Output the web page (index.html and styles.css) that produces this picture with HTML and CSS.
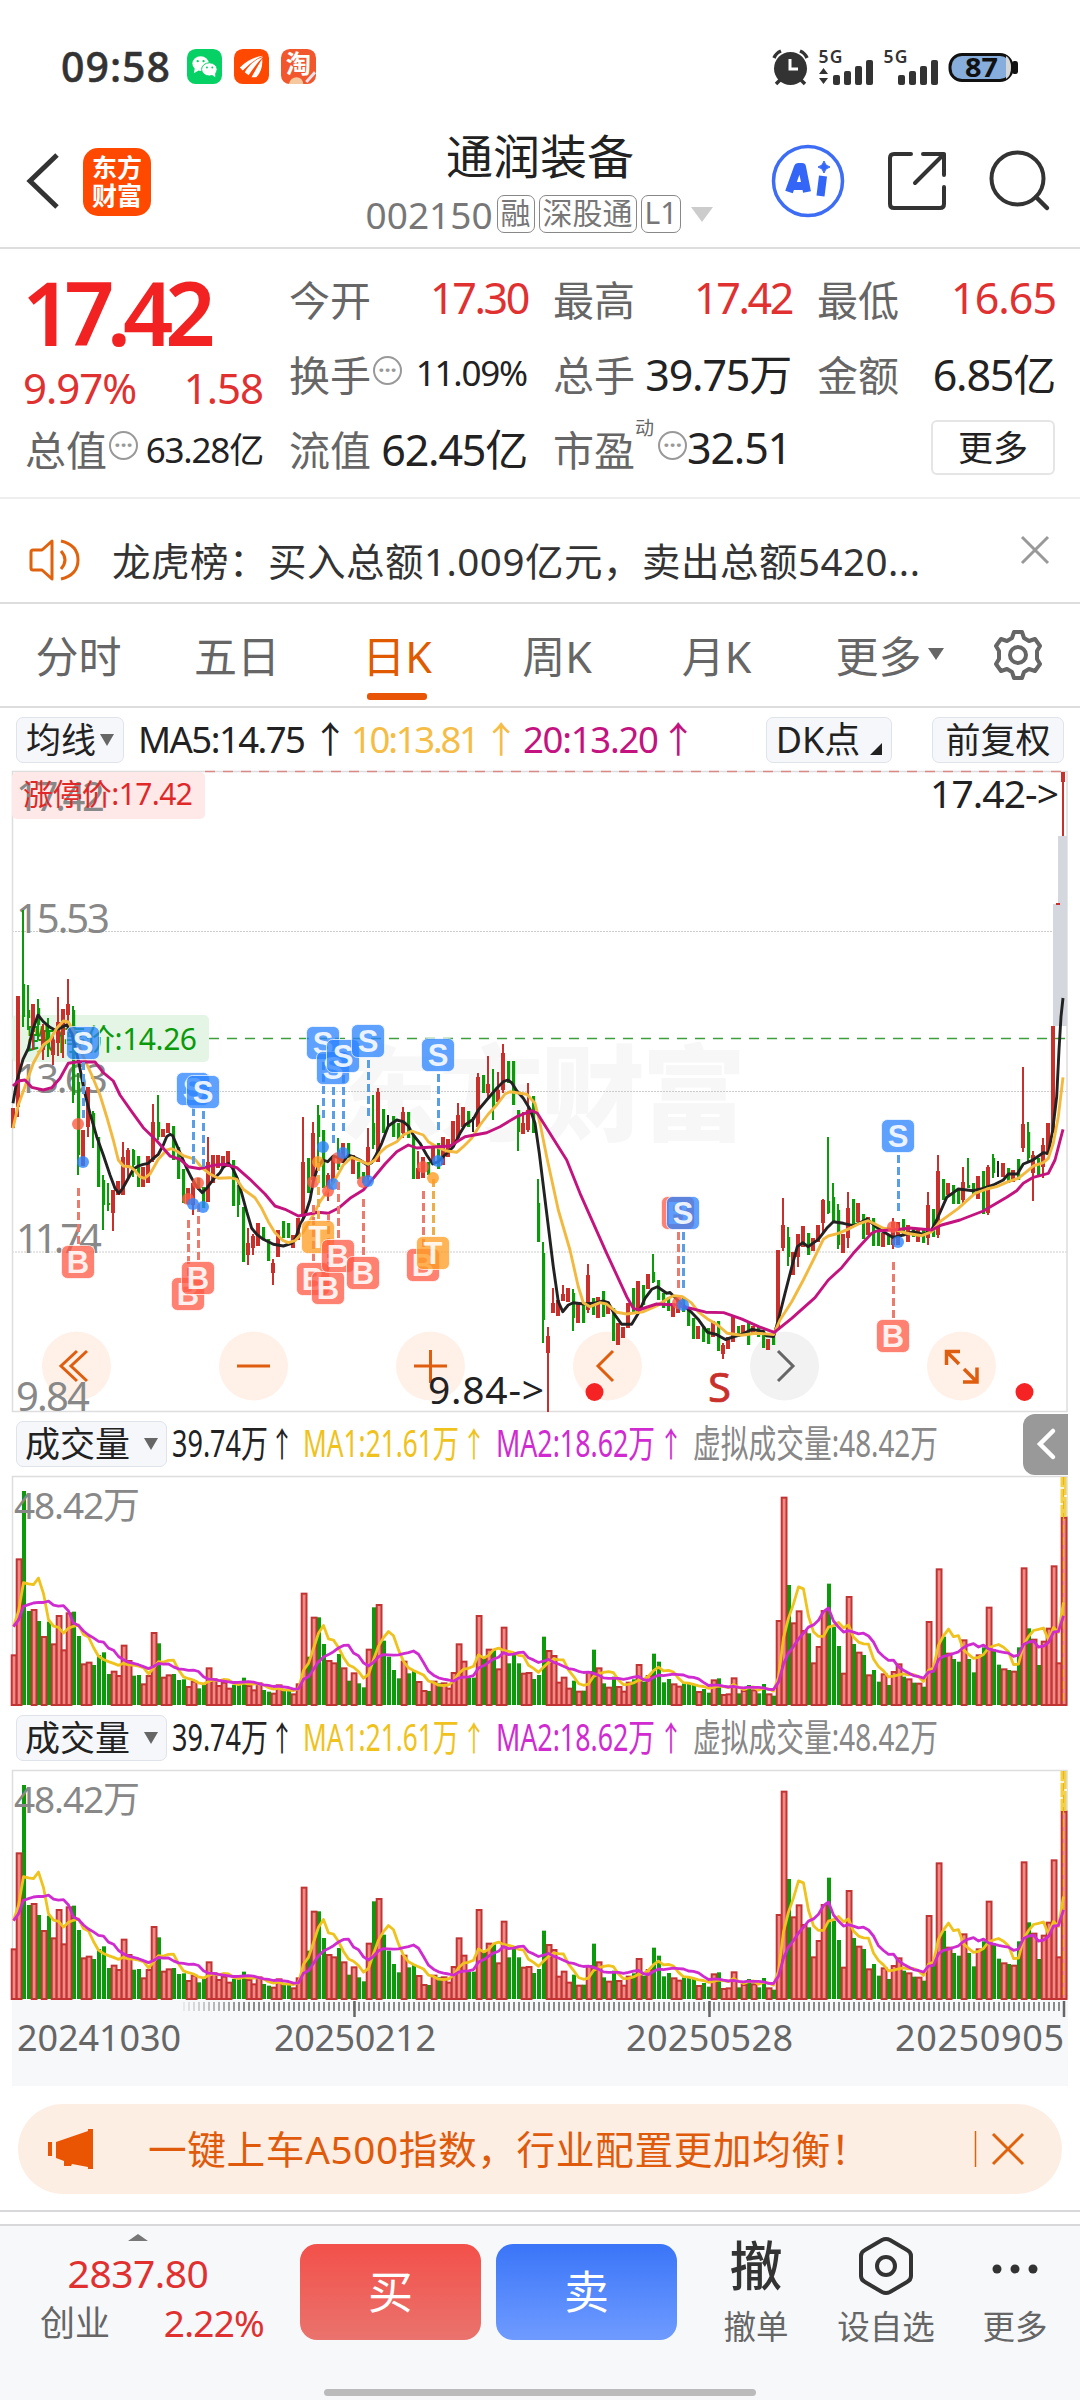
FILE: index.html
```html
<!DOCTYPE html>
<html lang="zh-CN">
<head>
    <meta charset="UTF-8">
    <meta name="viewport" content="width=device-width, initial-scale=1.0">
    <title>通润装备 002150</title>
    <link rel="stylesheet" href="styles.css">
</head>
<body>
    <div class="status-bar">
        <span class="clock">09:58</span>
        <svg class="app-icon" viewBox="0 0 36 36">
            <rect width="36" height="36" rx="9" fill="#06d165"/>
            <ellipse cx="14" cy="15" rx="8.5" ry="7.5" fill="#fff"/>
            <path d="M8 20l-1 5 5-3z" fill="#fff"/>
            <ellipse cx="23" cy="21" rx="8" ry="6.8" fill="#fff" stroke="#06d165"/>
            <path d="M25 26l4 3 0-5z" fill="#fff"/>
            <g fill="#06d165"><circle cx="11" cy="12.500" r="1.200"/><circle cx="17" cy="12.500" r="1.200"/><circle cx="20.500" cy="19" r="1"/><circle cx="26" cy="19" r="1"/></g>
        </svg>
        <svg class="app-icon" viewBox="0 0 36 36">
            <rect width="36" height="36" rx="9" fill="#ff4800"/>
            <path d="M6 19Q17 8 30 7Q20 11 9 22zM11 24Q18 12 30 8Q23 15 15 27zM18 29Q24 18 29 10Q30 22 23 29z" fill="#fff"/>
        </svg>
        <svg class="app-icon" viewBox="0 0 36 36">
            <rect width="36" height="36" rx="9" fill="#f2562c"/>
            <text x="18" y="25" text-anchor="middle" font-size="26" font-weight="700" fill="#fff">淘</text>
            <path d="M8 36q2-7 8-7t7 7z" fill="#f5c9a0"/>
            <path d="M26 34l9-10" stroke="#e8e2f0" stroke-width="3"/>
        </svg>
        <svg class="status-icons" viewBox="0 0 250 50">
            <g fill="#333">
                <circle cx="20.500" cy="23.500" r="16.500"/>
                <path d="M11 34l-5 5M30 34l5 5M4 13q2-5 7-7M37 13q-2-5-7-7" stroke="#333" stroke-width="3.500" fill="none"/>
                <path d="M20 14v10h8" stroke="#fff" stroke-width="3" fill="none"/>
                <text x="48.500" y="17.500" font-size="17.500" font-weight="600" textLength="24">5G</text>
                <path d="M49 26l4.500-6 4.500 6zM49 30l4.500 6 4.500-6z" transform="translate(0 3)"/>
                <rect x="63" y="30" width="7" height="10" rx="2"/><rect x="74" y="26" width="7" height="14" rx="2"/><rect x="85" y="21" width="7" height="19" rx="2"/><rect x="96" y="15" width="7" height="25" rx="2"/>
                <text x="113.500" y="17.500" font-size="17.500" font-weight="600" textLength="24">5G</text>
                <rect x="128" y="30" width="7" height="10" rx="2"/><rect x="139" y="26" width="7" height="14" rx="2"/><rect x="150" y="21" width="7" height="19" rx="2"/><rect x="161" y="15" width="7" height="25" rx="2"/>
            </g>
            <rect x="180" y="9.500" width="62" height="26" rx="12" fill="#86addb" stroke="#111" stroke-width="3"/>
            <path d="M236 11q5 3 5 11.500t-5 11.500z" fill="#d6d6d6"/>
            <rect x="242" y="16" width="6" height="13" rx="2.500" fill="#111"/>
            <text x="195" y="32" font-size="27" font-weight="700" fill="#111" textLength="33" lengthAdjust="spacingAndGlyphs">87</text>
        </svg>
    </div>

    <header class="header">
        <svg class="back" viewBox="0 0 34 56"><path d="M31 2L4 28l27 26" fill="none" stroke="#333" stroke-width="5"/></svg>
        <div class="logo">东方<br>财富</div>
        <div class="heading">
            <h1>通润装备</h1>
            <div class="code">
                <span>002150</span><i class="tag">融</i><i class="tag">深股通</i><i class="tag">L1</i><b class="arrow"></b>
            </div>
        </div>
        <svg class="ai" viewBox="0 0 74 74">
            <circle cx="37" cy="37" r="34.500" fill="none" stroke="#3d6cf5" stroke-width="3.500"/>
            <path d="M18 48L27 23h4l5 25M22 42h13" fill="none" stroke="#3366f6" stroke-width="8" stroke-linejoin="round"/>
            <path d="M52 32L49.500 52" stroke="#3366f6" stroke-width="8"/>
            <path d="M53 17q1 5 6 6q-5 1-6 6q-1-5-6-6q5-1 6-6z" fill="#3366f6" stroke="#3366f6"/>
        </svg>
        <svg class="share" viewBox="0 0 60 60">
            <path d="M24 4H7q-4 0-4 4v46q0 4 4 4h46q4 0 4-4V37M36 4h21v21M57 4L28 33" fill="none" stroke="#333" stroke-width="4" stroke-linecap="round" stroke-linejoin="round"/>
        </svg>
        <svg class="search" viewBox="0 0 60 62">
            <circle cx="27.500" cy="28.500" r="26" fill="none" stroke="#333" stroke-width="4"/>
            <path d="M46 47l11 11" stroke="#333" stroke-width="4.500" stroke-linecap="round"/>
        </svg>
    </header>

    <section class="quote">
        <div class="price">17.42</div>
        <div class="change"><span>9.97%</span><span>1.58</span></div>
        <div class="item c2 r1"><label>今开</label><em class="up">17.30</em></div>
        <div class="item c3 r1"><label>最高</label><em class="up">17.42</em></div>
        <div class="item c4 r1"><label>最低</label><em class="up wide">16.65</em></div>
        <div class="item c2 r2"><label>换手</label><i class="more-dot">···</i><em class="small">11.09%</em></div>
        <div class="item c3 r2"><label>总手</label><em>39.75万</em></div>
        <div class="item c4 r2"><label>金额</label><em>6.85亿</em></div>
        <div class="item c1 r3"><label>总值</label><i class="more-dot">···</i><em class="small">63.28亿</em></div>
        <div class="item c2 r3"><label>流值</label><em>62.45亿</em></div>
        <div class="item c3 r3"><label>市盈</label><sup>动</sup><i class="more-dot">···</i><em>32.51</em></div>
        <button class="more-btn">更多</button>
    </section>

    <section class="news">
        <svg class="speaker" viewBox="0 0 52 44">
            <path d="M4 12h9L23 3v38L13 32H4q-2 0-2-2V14q0-2 2-2z" fill="none" stroke="#e0620d" stroke-width="3" stroke-linejoin="round"/>
            <path d="M32 13q8 9 0 18M32 3q17 4 17 19t-17 19" fill="none" stroke="#e0620d" stroke-width="3"/>
        </svg>
        <p>龙虎榜：买入总额1.009亿元，卖出总额5420...</p>
        <svg class="close" viewBox="0 0 30 30"><path d="M2 2l26 26M28 2L2 28" stroke="#999" stroke-width="3"/></svg>
    </section>

    <nav class="tabs">
        <a>分时</a><a>五日</a><a class="active">日K</a><a>周K</a><a>月K</a><a>更多<b></b></a>
        <svg class="gear" viewBox="0 0 52 52">
            <path d="M22 3h8l2 6 5 3 6-2 5 7-3 5v8l3 5-5 7-6-2-5 3-2 6h-8l-2-6-5-3-6 2-5-7 3-5v-8l-3-5 5-7 6 2 5-3z" fill="none" stroke="#666" stroke-width="4" stroke-linejoin="round"/>
            <circle cx="26" cy="26" r="8" fill="none" stroke="#666" stroke-width="4"/>
        </svg>
    </nav>

    <div class="ma-row">
        <button class="chip ma-chip">均线<b class="down"></b></button>
        <svg class="ma-text" viewBox="0 0 560 50">
            <text x="0" y="38" textLength="168" fill="#222">MA5:14.75</text><text x="174" y="38" fill="#222">↑</text>
            <text x="213" y="38" textLength="129" fill="#f5bd45">10:13.81</text><text x="345" y="38" fill="#f5bd45">↑</text>
            <text x="385" y="38" textLength="136" fill="#c4127f">20:13.20</text><text x="522" y="38" fill="#c4127f">↑</text>
        </svg>
        <button class="chip dk-chip">DK点<b class="corner"></b></button>
        <button class="chip fq-chip">前复权</button>
    </div>

    <svg class="kline" id="kline" viewBox="0 771 1080 641"></svg>

    <div class="vol-head">
        <button class="chip vol-chip">成交量<b class="down"></b></button>
        <svg class="vol-text" viewBox="0 0 780 50">
            <text x="0" y="38" textLength="96" lengthAdjust="spacingAndGlyphs" fill="#222">39.74万</text><text class="tip" x="98" y="38" textLength="24" lengthAdjust="spacingAndGlyphs" fill="#222">↑</text>
            <text x="131" y="38" textLength="156" lengthAdjust="spacingAndGlyphs" fill="#efc21c">MA1:21.61万</text><text class="tip" x="290" y="38" textLength="24" lengthAdjust="spacingAndGlyphs" fill="#efc21c">↑</text>
            <text x="324" y="38" textLength="159" lengthAdjust="spacingAndGlyphs" fill="#cf2bd0">MA2:18.62万</text><text class="tip" x="487" y="38" textLength="24" lengthAdjust="spacingAndGlyphs" fill="#cf2bd0">↑</text>
            <text x="521" y="38" textLength="245" lengthAdjust="spacingAndGlyphs" fill="#888">虚拟成交量:48.42万</text>
        </svg>
        <div class="fold"><svg viewBox="0 0 20 32"><path d="M17 3L4 16l13 13" fill="none" stroke="#fff" stroke-width="4.500" stroke-linecap="round"/></svg></div>
    </div>
    <svg class="volume" viewBox="0 0 1080 230"></svg>

    <div class="vol-head">
        <button class="chip vol-chip">成交量<b class="down"></b></button>
        <svg class="vol-text" viewBox="0 0 780 50">
            <text x="0" y="38" textLength="96" lengthAdjust="spacingAndGlyphs" fill="#222">39.74万</text><text class="tip" x="98" y="38" textLength="24" lengthAdjust="spacingAndGlyphs" fill="#222">↑</text>
            <text x="131" y="38" textLength="156" lengthAdjust="spacingAndGlyphs" fill="#efc21c">MA1:21.61万</text><text class="tip" x="290" y="38" textLength="24" lengthAdjust="spacingAndGlyphs" fill="#efc21c">↑</text>
            <text x="324" y="38" textLength="159" lengthAdjust="spacingAndGlyphs" fill="#cf2bd0">MA2:18.62万</text><text class="tip" x="487" y="38" textLength="24" lengthAdjust="spacingAndGlyphs" fill="#cf2bd0">↑</text>
            <text x="521" y="38" textLength="245" lengthAdjust="spacingAndGlyphs" fill="#888">虚拟成交量:48.42万</text>
        </svg>
    </div>
    <svg class="volume" viewBox="0 0 1080 230"></svg>

    <svg class="axis" id="axis" viewBox="12 0 1056 86"></svg>

    <div class="banner">
        <svg class="horn" viewBox="0 0 46 40"><path d="M0 13h4v14H0zM8 13L40 2V0h5v40h-5v-2l-16-3-1 2h-7v-5l-8-3z" fill="#ea5504"/></svg>
        <p>一键上车A500指数，行业配置更加均衡！</p>
        <svg class="banner-close" viewBox="0 0 52 40"><path d="M1.500 2v36" stroke="#e0620d" stroke-width="1.500"/><path d="M19 5l30 30M49 5L19 35" stroke="#e0620d" stroke-width="3"/></svg>
    </div>

    <footer class="footer">
        <div class="index">
            <b class="up-arrow"></b>
            <div class="index-value">2837.80</div>
            <div class="index-row"><span>创业</span><em>2.22%</em></div>
        </div>
        <button class="trade buy">买</button>
        <button class="trade sell">卖</button>
        <div class="tool t1"><strong>撤</strong><span>撤单</span></div>
        <div class="tool t2">
            <svg viewBox="0 0 56 60"><path d="M28 3q2 0 4 1l17 10q4 2 4 6v20q0 4-4 6L32 56q-4 2-8 0L7 46q-4-2-4-6V20q0-4 4-6L24 4q2-1 4-1z" fill="none" stroke="#333" stroke-width="4"/><circle cx="28" cy="30" r="9" fill="none" stroke="#333" stroke-width="4"/></svg>
            <span>设自选</span>
        </div>
        <div class="tool t3">
            <svg viewBox="0 0 56 60"><g fill="#333"><circle cx="10" cy="33" r="4.500"/><circle cx="28" cy="33" r="4.500"/><circle cx="46" cy="33" r="4.500"/></g></svg>
            <span>更多</span>
        </div>
        <div class="home"></div>
    </footer>
    <script src="chart.js"></script>
</body>
</html>
```
FILE: styles.css
```css
* {
    box-sizing: border-box;
}
html, body {
    margin: 0;
    padding: 0;
}
body {
    width: 1080px;
    height: 2400px;
    overflow: hidden;
    background: #fff;
    color: #222;
    font-family: "Noto Sans", "Noto Sans CJK SC", sans-serif;
}
svg {
    display: block;
    flex: none;
    overflow: visible;
}
svg text {
    font-family: "Noto Sans", "Noto Sans CJK SC", sans-serif;
}
h1, p {
    margin: 0;
    font-weight: 400;
}
em, i {
    font-style: normal;
}
button {
    font-family: inherit;
    padding: 0;
    margin: 0;
}

/* 状态栏 */
.status-bar {
    height: 130px;
    padding: 44px 60px 0 61px;
    display: flex;
    align-items: flex-start;
}
.clock {
    width: 126px;
    font-size: 41px;
    line-height: 44px;
    font-weight: 500;
    letter-spacing: 1px;
    color: #333;
    -webkit-text-stroke: 0.5px #333;
}
.app-icon {
    width: 35px;
    height: 35px;
    margin: 5px 12px 0 0;
}
.status-icons {
    width: 250px;
    height: 50px;
    margin: 1px 0 0 auto;
}

/* 标题 */
.header {
    height: 119px;
    border-bottom: 2px solid #ddd;
    display: flex;
    align-items: flex-start;
}
.back {
    width: 34px;
    height: 56px;
    margin: 23px 0 0 26px;
}
.logo {
    width: 68px;
    height: 68px;
    margin: 18px 0 0 23px;
    border-radius: 15px;
    background: #ff4800;
    color: #fff;
    font-size: 25px;
    line-height: 28px;
    padding-top: 5px;
    font-weight: 700;
    text-align: center;
}
.heading {
    width: 400px;
    margin: -2px 0 0 189px;
    text-align: center;
}
.heading h1 {
    font-size: 47px;
    line-height: 56px;
}
.code {
    display: flex;
    align-items: center;
    justify-content: center;
    gap: 4px;
    height: 60px;
    color: #777;
    font-size: 37px;
    padding-right: 21px;
    margin-left: 20px;
}
.tag {
    height: 38px;
    padding: 0 3px;
    border: 1.5px solid #888;
    border-radius: 7px;
    font-size: 30px;
    line-height: 34px;
}
.arrow {
    margin-left: 6px;
    border: 11px solid transparent;
    border-top: 15px solid #ccc;
    border-bottom: 0;
}
.ai {
    width: 74px;
    height: 74px;
    margin: 14px 0 0 31px;
}
.share {
    width: 60px;
    height: 60px;
    margin: 20px 0 0 42px;
}
.search {
    width: 60px;
    height: 62px;
    margin: 20px 0 0 43px;
}

/* 报价 */
.quote {
    height: 250px;
    padding: 11px 25px 0 26px;
    display: grid;
    grid-template-columns: 237px 237px 237px 237px;
    grid-template-rows: 75px 75px 75px;
    column-gap: 27px;
    border-bottom: 2px solid #eee;
}
.price {
    grid-area: 1 / 1 / 3 / 2;
    font-size: 88px;
    line-height: 104px;
    font-weight: 600;
    letter-spacing: -8px;
    margin-left: -4px;
    color: #f22222;
}
.change {
    grid-area: 1 / 1 / 3 / 2;
    align-self: end;
    display: flex;
    justify-content: space-between;
    font-size: 42px;
    line-height: 50px;
    letter-spacing: -1px;
    color: #e03030;
    margin: 0 0 -3px -3px;
}
.item {
    display: flex;
    align-items: center;
    min-width: 0;
    white-space: nowrap;
    font-size: 43px;
    margin-left: -1px;
}
.item label {
    color: #666;
    font-size: 41px;
    width: 82px;
}
.item em {
    margin-left: auto;
    letter-spacing: -1.2px;
}
.item .up {
    color: #e03030;
    letter-spacing: -2.4px;
    margin-right: -1px;
}
.item .up.wide {
    letter-spacing: -1px;
}
.item .small {
    font-size: 35px;
    letter-spacing: -1.2px;
}
.item sup {
    font-size: 19px;
    color: #666;
    margin-top: -40px;
    width: 22px;
    line-height: 20px;
}
.more-dot {
    width: 29px;
    height: 29px;
    flex: none;
    border: 2px solid #999;
    border-radius: 50%;
    color: #999;
    font-size: 22px;
    line-height: 23px;
    font-weight: 700;
    letter-spacing: 0;
    text-align: center;
    margin: -4px 0 0 2px;
}
.c1 { grid-column: 1; }
.c2 { grid-column: 2; }
.c3 { grid-column: 3; }
.c4 { grid-column: 4; }
.r1 { grid-row: 1; }
.r2 { grid-row: 2; }
.r3 { grid-row: 3; }
.more-btn {
    grid-area: 3 / 4;
    justify-self: end;
    align-self: center;
    width: 124px;
    height: 55px;
    border: 2px solid #e5e5e5;
    border-radius: 6px;
    background: #fff;
    color: #222;
    font-size: 35px;
    line-height: 48px;
}

/* 公告 */
.news {
    height: 105px;
    border-bottom: 2px solid #ddd;
    display: flex;
    align-items: center;
    padding: 19px 30px 0 29px;
}
.speaker {
    width: 52px;
    height: 44px;
}
.news p {
    width: 840px;
    margin: -2px 0 0 31px;
    font-size: 38.5px;
    letter-spacing: 0.5px;
    white-space: nowrap;
    color: #333;
}
.close {
    width: 30px;
    height: 30px;
    margin: -20px 0 0 68px;
}

/* 周期 */
.tabs {
    height: 104px;
    border-bottom: 2px solid #ddd;
    display: grid;
    grid-template-columns: 157px 160px 160px 160px 159px 187px 52px;
    align-items: center;
}
.tabs a {
    height: 102px;
    line-height: 106px;
    text-align: center;
    font-size: 43px;
    color: #666;
}
.tabs .active {
    color: #e05a00;
    display: flex;
    flex-direction: column;
    align-items: center;
}
.tabs .active::after {
    content: "";
    width: 60px;
    height: 7px;
    border-radius: 3px;
    background: #e95506;
    flex: none;
    margin-top: -17px;
}
.tabs b {
    display: inline-block;
    margin: 0 0 13px 6px;
    border: 8px solid transparent;
    border-top: 12px solid #666;
    border-bottom: 0;
}
.gear {
    width: 52px;
    height: 52px;
    margin-left: 9px;
}

/* 均线 */
.ma-row, .vol-head {
    height: 64px;
    display: flex;
    align-items: center;
    padding: 0 16px;
}
.chip {
    height: 46px;
    border: 1.5px solid #dfe3ea;
    border-radius: 7px;
    background: #f6f7fb;
    color: #222;
    font-size: 35px;
    line-height: 42px;
    white-space: nowrap;
    display: flex;
    align-items: center;
    justify-content: center;
}
.down {
    border: 7.5px solid transparent;
    border-top: 12px solid #666;
    border-bottom: 0;
}
.ma-chip {
    width: 108px;
}
.ma-chip .down {
    margin-left: 4px;
}
.ma-text {
    width: 560px;
    height: 50px;
    margin-left: 14px;
    font-size: 36.5px;
}
.dk-chip {
    width: 126px;
    margin-left: 68px;
    gap: 10px;
    font-size: 36px;
}
.corner {
    border-left: 12px solid transparent;
    border-bottom: 12px solid #222;
    margin-top: 18px;
}
.fq-chip {
    width: 132px;
    margin-left: 40px;
}
.ma-row {
    height: 63px;
}
.kline {
    width: 1080px;
    height: 641px;
}

/* 成交量 */
.vol-head {
    padding-right: 12px;
}
.vol-chip {
    width: 151px;
    gap: 14px;
    font-size: 35px;
}
.vol-text {
    width: 780px;
    height: 50px;
    margin-left: 5px;
    font-size: 38px;
}
.vol-text .tip {
    font-size: 34px;
}
.fold {
    width: 45px;
    height: 61px;
    margin-left: auto;
    border-radius: 12px 0 0 12px;
    background: #999;
    display: flex;
    align-items: center;
    justify-content: center;
}
.fold svg {
    width: 20px;
    height: 32px;
}
.volume {
    width: 1080px;
    height: 230px;
}
.axis {
    width: 1056px;
    height: 86px;
    margin-left: 12px;
    background: #f7f8fa;
}

/* 广告条 */
.banner {
    width: 1044px;
    height: 90px;
    margin: 18px 18px 16px;
    border-radius: 45px;
    background: #fdeee4;
    display: flex;
    align-items: center;
    padding: 0 36px 0 30px;
}
.horn {
    width: 46px;
    height: 40px;
}
.banner p {
    margin: -4px 0 0 54px;
    font-size: 38.7px;
    letter-spacing: 0.6px;
    color: #e05a0c;
    white-space: nowrap;
}
.banner-close {
    width: 52px;
    height: 40px;
    margin-left: auto;
}

/* 底部 */
.footer {
    height: 190px;
    border-top: 2px solid #d8d8da;
    background: linear-gradient(#fff 12px, #d8d8da 12px, #d8d8da 14px, #f6f8fa 14px);
    display: grid;
    grid-template-columns: 300px 181px 181px 108px 175px 120px;
    grid-template-rows: 166px 22px;
}
.footer .sell {
    margin-left: 15px;
}
.index {
    width: 276px;
    padding-top: 22px;
    display: flex;
    flex-direction: column;
    align-items: center;
}
.up-arrow {
    border: 10px solid transparent;
    border-bottom: 7px solid #777;
    border-top: 0;
}
.index-value {
    font-size: 39px;
    line-height: 42px;
    margin-top: 11px;
    letter-spacing: -0.5px;
    color: #e03030;
}
.index-row {
    width: 224px;
    margin: 7px 0 0 28px;
    display: flex;
    justify-content: space-between;
    font-size: 35px;
    line-height: 44px;
    color: #666;
}
.index-row em {
    font-size: 37px;
    letter-spacing: -0.8px;
    color: #e03030;
}
.trade {
    width: 181px;
    height: 96px;
    margin-top: 32px;
    border: 0;
    border-radius: 17px;
    color: #fff;
    font-size: 45px;
    line-height: 90px;
}
.buy {
    background: linear-gradient(#f3504a, #ea736d);
}
.sell {
    background: linear-gradient(#3a75f8, #6f9bff);
}
.tool {
    display: flex;
    flex-direction: column;
    align-items: center;
    padding-top: 24px;
    font-size: 32.5px;
    color: #666;
    white-space: nowrap;
}
.tool strong {
    height: 60px;
    font-size: 53px;
    line-height: 60px;
    font-weight: 500;
    color: #333;
}
.tool svg {
    width: 56px;
    height: 60px;
}
.tool span {
    line-height: 40px;
    margin-top: 11px;
}
.t1 {
    width: 120px;
    margin-left: 34px;
}
.t2 {
    width: 120px;
    margin-left: 56px;
}
.t3 {
    width: 120px;
    margin-left: 10px;
}
.home {
    grid-column: 1 / -1;
    width: 432px;
    height: 7px;
    margin: 11px auto 0 324px;
    border-radius: 4px;
    background: #bbb;
}
```
FILE: chart.js
```javascript
// 每根K线: 颜色 最高 最低 [实体上 实体下]
const candles = `r1108,1128 r996,1117,996,1107 g910,1027,984,1017 g985,1030,1010,1018 r1004,1050,1004,1032
g999,1040,1008,1025 r1024,1060,1030,1050 g1018,1057,1030,1047 r1033,1065,1040,1055 r997,1056,1022,1043
r1009,1058,1009,1035 r979,1030,1004,1015 g1006,1103,1010,1095 g1073,1175,1082,1155 r1130,1166
r1087,1137,1087,1127 g1111,1148,1113,1130 g1137,1187 g1175,1230,1180,1205 g1183,1211,1203,1205
r1190,1231,1190,1213 r1181,1195 r1142,1195,1157,1195 r1148,1178,1150,1168 g1149,1177,1150,1165
g1156,1187 r1167,1187 r1156,1183 r1104,1162,1122,1160 g1095,1140,1122,1137
r1129,1137 r1123,1133 g1126,1160 g1147,1179 g1169,1203
r1188,1204 r1183,1215,1183,1205 g1178,1190 g1187,1208 r1137,1202,1162,1202
r1155,1183 r1155,1168 r1156,1168 r1151,1167 g1160,1206
g1185,1217,1188,1205 g1207,1262 r1228,1265,1243,1255 r1234,1255,1236,1248 r1223,1246
g1227,1240 g1239,1261 r1259,1285,1263,1273 r1230,1257 g1221,1238
g1223,1238 r1235,1248 r1218,1240 r1117,1220,1162,1215 g1158,1193
r1122,1187,1133,1180 g1105,1167,1115,1137 g1130,1188 r1173,1201,1175,1187 r1156,1183
g1138,1170,1150,1167 r1143,1163 g1143,1158 r1155,1174 g1162,1179
g1172,1183 r1128,1182,1147,1177 g1095,1149,1123,1145 r1088,1162,1092,1162 g1109,1133
k1115,1127 g1116,1137 g1123,1139 r1107,1138,1112,1133 g1112,1138
g1135,1179 r1151,1179,1168,1179 r1157,1178 g1162,1175 r1148,1163
g1143,1169 r1137,1165 r1139,1157 r1121,1147 r1103,1140,1115,1138
r1107,1127 g1111,1127 k1117,1132 r1073,1127,1077,1127 g1075,1093
r1056,1098,1084,1093 g1069,1120,1090,1107 r1072,1103,1090,1102 r1044,1093,1053,1090 g1061,1083
g1061,1105 g1110,1151,1110,1132 r1112,1134,1123,1134 r1083,1132,1110,1130 g1096,1133
g1179,1242,1203,1242 g1242,1343,1253,1320 r1327,1412,1336,1353 r1288,1313,1303,1313 r1300,1316
r1285,1301,1294,1301 r1288,1302 g1289,1331,1293,1318 r1303,1323 g1303,1323
r1264,1313,1275,1310 g1298,1315 r1297,1318 g1291,1317 r1302,1314
g1308,1341 r1323,1345 r1327,1338 r1303,1328 g1288,1313
r1281,1312 g1285,1305 r1274,1289 g1254,1283,1272,1282 g1280,1300
g1293,1308 g1297,1311 r1303,1317 r1300,1313 g1298,1312
g1307,1326 g1318,1339 r1326,1339 g1326,1342 g1328,1344
r1321,1337 g1321,1351 r1343,1359,1345,1354 r1337,1349 r1315,1342
g1326,1337 r1325,1334 g1321,1345 r1326,1335 g1327,1337
g1330,1348 r1339,1350 g1337,1345 r1250,1330 r1198,1251,1225,1248
g1227,1266,1237,1257 r1252,1275 r1234,1267,1234,1257 r1226,1247 g1233,1255
r1238,1251 r1225,1242 r1199,1233,1200,1223 g1137,1214,1201,1213 g1183,1223,1197,1222
g1204,1249,1210,1245 r1234,1253 r1192,1248,1208,1238 g1199,1225 r1203,1222
g1214,1239 r1217,1235 g1218,1246 g1230,1246 r1233,1247
g1234,1245 r1218,1249,1222,1245 r1222,1245 g1219,1235 r1225,1242
g1227,1237 r1230,1242 g1230,1243 r1192,1245,1205,1238 g1209,1237
r1155,1238,1171,1235 g1179,1200 r1183,1195 g1185,1204 g1190,1204
r1167,1203,1182,1200 g1158,1188,1185,1188 g1183,1195 r1176,1199 g1171,1214
r1165,1215,1167,1213 g1154,1178,1158,1173 k1161,1177 r1163,1177 g1168,1183
r1170,1182 g1159,1180 r1067,1152,1124,1148 g1122,1162,1132,1158 r1151,1201,1155,1173
g1158,1175 r1138,1178,1145,1167 r1123,1155 r1026,1133 r903,905
r772,836,772,782`.split(/\s+/).map(s => ({ c: s[0], v: s.slice(1).split(',').map(Number) }));

// 成交量柱顶位置
const tops = [733,445,243,603,597,633,678,635,700,615,718,607,605,678,760,755,765,735,727,792,
    782,795,704,750,797,795,820,795,666,700,800,793,792,810,808,828,812,835,825,772,
    805,825,815,833,825,822,803,825,838,817,840,845,848,823,843,843,850,820,548,740,
    620,622,702,750,757,732,772,812,787,820,832,716,592,582,692,740,780,805,752,790,
    780,813,840,843,812,820,817,833,786,700,752,803,803,615,745,716,720,775,650,760,
    735,760,788,786,807,795,680,720,735,815,800,833,812,842,842,783,719,772,820,830,
    800,828,842,815,808,762,815,795,731,755,817,807,820,827,820,822,825,843,837,848,
    808,805,852,850,802,850,840,825,838,850,822,850,857,630,260,525,637,601,660,670,
    757,708,600,521,650,708,788,558,702,725,735,793,780,815,790,825,783,760,800,805,
    818,818,830,633,770,475,680,728,747,755,688,747,787,733,712,590,718,764,775,780,
    782,712,472,655,686,765,692,653,466,757,320];
// 首日之前的数据，均线用
const before = [650,650,650,650,650,674,674,585,585];

const RED = '#c9302c', GREEN = '#0a9a0a';
const colors = { r: RED, g: GREEN, k: '#222' };

// 每段: [原点x, 原点y, 横向比例, 纵向比例, 点...]
const A = [0, 900, 3, 3], B = [280, 980, 3, 3], C = [520, 760, 2.8, 2.376], D = [760, 1000, 3, 3];
const lines = {
    '#222': [
        [A, '39,610 50,545 69,478 85,445 98,390 114,345 130,365 150,382 165,390 180,385 200,374 215,400 225,440 237,490 252,570 270,640 290,710 310,765 330,825 345,865 357,880 370,862 385,835 400,808 415,798 430,793 445,790 460,775 475,763 490,735 500,710 510,703 518,707 530,735 545,770 560,805 575,835 590,860 607,878 620,865 640,838 660,818 670,802 685,790 697,803 712,835 725,880 740,935 755,985 770,1003 790,1018 805,1025 820,1033 850,1038'],
        [B, '35,790 48,772 58,740 75,705 90,660 100,605 112,565 128,540 143,545 160,528 175,533 190,545 205,525 220,530 240,540 262,555 275,548 288,525 305,490 325,438 350,420 370,425 385,438 400,465 420,490 440,525 458,552 475,545 500,520 520,500 540,460 555,435 580,418 595,390 620,360 650,325 670,305 683,300 695,308 710,332 730,355 750,388 765,430 778,520 800,700 820,860 835,965 848,995 865,975 880,968 910,972 940,970 970,963 985,968 1005,1005 1025,1033 1055,1033 1075,1000 1095,955 1115,928 1132,920 1160,940'],
        [C, '420,1265 455,1295 480,1312 500,1330 525,1360 550,1365 575,1377 600,1370 620,1365 650,1353 680,1358 690,1368 710,1370'],
        [D, '55,960 75,880 97,795 112,740 128,728 145,740 175,718 200,685 220,665 250,670 280,677 300,668 322,657 345,678 365,692 398,712 430,705 460,695 490,703 515,690 530,660 560,592 580,578 595,567 640,572 670,565 700,555 730,540 745,522 772,522 790,492 815,482 850,458 865,460 878,390 890,290 897,150 903,50 909,-6']
    ],
    '#f3b93f': [
        [A, '39,685 55,615 80,545 100,490 130,435 150,420 170,385 190,363 205,366 225,400 250,470 275,525 300,585 320,650 340,720 355,780 370,798 390,800 405,812 420,830 433,835 450,822 475,778 500,750 515,746 530,753 550,767 585,778 605,803 630,822 655,835 690,833 710,838 730,868 765,893 785,925 805,965 825,998 850,1022 865,1028'],
        [B, '45,782 70,755 100,705 120,665 145,630 170,590 190,555 215,532 240,542 265,553 285,540 300,518 320,500 350,485 370,465 395,453 430,465 445,485 475,503 500,513 530,517 550,500 575,475 600,435 625,402 650,375 675,342 690,335 740,343 765,370 780,430 800,530 835,690 870,810 895,920 910,968 930,980 960,968 980,972 1010,997 1040,1002 1090,995 1130,978 1165,955'],
        [C, '430,1273 455,1275 480,1290 500,1312 525,1328 550,1340 580,1362 620,1367 660,1362 710,1365'],
        [D, '60,960 95,905 130,840 160,780 190,718 205,708 235,700 270,685 300,670 325,662 345,672 370,685 410,690 440,700 485,707 515,695 540,665 595,625 645,580 680,567 710,560 745,545 775,535 800,515 820,498 850,488 865,475 880,430 895,350 909,232']
    ],
    '#c4127f': [
        [A, '39,558 55,543 75,540 95,562 130,570 155,563 180,535 205,490 235,485 285,486 310,518 340,543 360,585 395,635 430,683 470,722 510,768 540,778 565,800 600,806 640,796 675,793 710,803 750,838 795,882 825,918 855,928'],
        [B, '30,695 55,708 115,697 145,700 175,685 210,655 250,630 280,595 315,552 350,515 385,495 410,504 510,498 555,470 620,458 660,440 710,410 757,392 772,400 860,540 900,640 980,820 1040,950 1060,985 1075,990 1130,972'],
        [C, '440,1295 520,1312 570,1313 620,1328 670,1347 712,1360'],
        [D, '95,955 165,893 205,840 245,803 280,760 335,700 350,693 420,688 450,684 515,690 545,675 600,660 670,633 740,592 770,572 790,550 820,532 865,520 885,480 909,388']
    ]
};

// 买卖点: 类型 x 标签y 圆点y
const marks = [
    ['B', 78, 1262, 1124], ['S', 83, 1043, 1162],
    ['B', 188, 1294, 1199], ['S', 193, 1089, 1204], ['B', 198, 1278, 1183], ['S', 203, 1092, 1207],
    ['B', 313, 1279, 1182], ['T', 318, 1237, 1162], ['S', 323, 1043, 1147], ['B', 328, 1288, 1191],
    ['S', 333, 1068, 1184], ['B', 338, 1256, 1158], ['S', 343, 1056, 1153], ['B', 363, 1273, 1182],
    ['S', 368, 1041, 1181], ['B', 423, 1265, 1167], ['T', 433, 1253, 1178], ['S', 438, 1055, 1161],
    ['B', 678, 1213, 1303], ['S', 683, 1213, 1305], ['B', 893, 1336, 1227], ['S', 898, 1136, 1242]
];

function rect(x, y, w, h, fill, extra = '') {
    return `<rect x="${x}" y="${y}" width="${w}" height="${h}" fill="${fill}" ${extra}/>`;
}
function line(x1, y1, x2, y2, stroke, w = 1, extra = '') {
    return `<path d="M${x1} ${y1}L${x2} ${y2}" stroke="${stroke}" stroke-width="${w}" ${extra}/>`;
}
function text(x, y, s, size, fill, len, extra = '') {
    return `<text x="${x}" y="${y}" font-size="${size}" fill="${fill}" textLength="${len}" ${extra}>${s}</text>`;
}
function poly(points, stroke, w) {
    return `<polyline points="${points}" fill="none" stroke="${stroke}" stroke-width="${w}" stroke-linejoin="round"/>`;
}

function drawKline() {
    let h = '';
    h += text(338, 1133, '东方财富', 104, '#f7f7f7', 408, 'font-weight="900"');
    [931.5, 1091.5, 1252].forEach(y => h += line(12, y, 1067, y, '#ccc', 1, 'stroke-dasharray="2 1"'));
    h += `<path d="M12.500 771.500H1067V1411.500H12.500z" fill="none" stroke="#ddd" stroke-width="1.500"/>`;
    h += line(205, 771.5, 1067, 771.5, '#d98a88', 1.5, 'stroke-dasharray="10 8"');
    h += line(209, 1038.5, 1067, 1038.5, '#3c9f3c', 1.5, 'stroke-dasharray="10 8"');

    // 按钮
    for (let i = 0; i < 6; i++) {
        h += `<circle cx="${76.500 + i * 177}" cy="1366" r="34.500" fill="${i == 4 ? '#f2f2f2' : '#fff0e8'}"/>`;
    }
    h += `<g fill="none" stroke="#df5d0e" stroke-width="3">
        <path d="M77 1351L61 1366l16 15M87 1351L71 1366l16 15M237 1366h33M414 1366h33M430.500 1350v33"/>
        <path d="M613 1351L598 1366l15 15"/>
        <path d="M778 1351l15 15-15 15" stroke="#666"/>
        <path d="M946.500 1365v-13.500H960M947 1352l12 12M963 1382h14v-14.500M977 1382l-13-13" stroke-width="3.500"/></g>`;

    // 缺口
    h += rect(1058, 836, 9, 68, '#d4d7dd') + rect(1053, 904, 14, 122, '#d4d7dd');

    h += rect(12, 772, 193, 47, '#fee8e8', 'rx="5"');
    h += rect(12, 1015, 197, 47, '#e4f5e6', 'rx="5"');
    [['17.42', 811, 89], ['15.53', 933, 94], ['13.63', 1093, 92], ['11.74', 1253, 86], ['9.84', 1411, 74]]
        .forEach(t => h += text(16, t[1], t[0], 40, '#888', t[2]));
    h += text(23, 805, '涨停价:17.42', 30, '#e02828', 170);
    h += text(26, 1050, '跌停价:14.26', 30, '#0a9a0a', 171);

    candles.forEach((k, i) => {
        const x = 12 + i * 5, [hi, lo, top = hi, bot = lo] = k.v, c = colors[k.c];
        h += rect(x, hi, 2, lo - hi, c);
        if (k.c == 'r') h += rect(x - 1, top, 4, bot - top, c);
        if (k.c == 'g') h += rect(x, top, 3.2, bot - top, c);
    });
    for (const color in lines) {
        const pts = lines[color].map(([o, s]) => s.split(' ').map(p => {
            const [x, y] = p.split(',').map(Number);
            return (o[0] + x / o[2]).toFixed(1) + ',' + (o[1] + y / o[3]).toFixed(1);
        }).join(' ')).join(' ');
        h += poly(pts, color, 2.9);
    }

    const fills = { S: '#2c84ff', B: '#ff5a45', T: '#ff9c22' };
    const dashes = { S: '#5b9ee8', B: '#ec7b6d', T: '#efad48' };
    marks.forEach(([t, x, y, dot]) => {
        const down = y < dot;
        h += line(x + .5, down ? y + 19 : y - 18, x + .5, down ? y + 75 : y - 74, dashes[t], 3, 'stroke-dasharray="8 4"');
        h += `<circle cx="${x}" cy="${dot}" r="6" fill="${fills[t]}" fill-opacity=".8"/>`;
    });
    marks.forEach(([t, x, y]) => {
        h += rect(x - 16.5, y - 16.5, 33, 33, fills[t], 'rx="6" fill-opacity=".76" stroke="#fff" stroke-opacity=".7"');
        h += `<text class="mark" x="${x}" y="${y + 11}" font-size="31" font-weight="700" fill="#fff" fill-opacity=".9" text-anchor="middle" style="font-family:'Liberation Sans'">${t}</text>`;
    });

    h += text(930, 808, '17.42-&gt;', 39, '#222', 129);
    h += text(428, 1404, '9.84-&gt;', 39, '#222', 116);
    h += `<circle cx="594.500" cy="1392" r="9" fill="#f52323"/><circle cx="1024.500" cy="1392" r="9" fill="#f52323"/>`;
    h += text(708, 1402, 'S', 40, '#c9302c', 23, 'lengthAdjust="spacingAndGlyphs" stroke="#c9302c" stroke-width=".7"');
    document.getElementById('kline').innerHTML = h;
}

function average(n) {
    const all = before.concat(tops);
    return tops.map((_, i) => {
        const end = i + before.length + 1;
        const sum = all.slice(end - n, end).reduce((a, b) => a + b, 0);
        return (13.5 + i * 5) + ',' + ((sum / n - 198) / 3).toFixed(1);
    }).join(' ');
}

function drawVolume(svg) {
    let h = '<path d="M12.500 229V.500H1067V229" fill="none" stroke="#ddd" stroke-width="1.500"/>';
    tops.forEach((t, i) => {
        const x = 12 + i * 5, y = (t - 198) / 3;
        if (candles[i].c != 'r') h += rect(x, y, 4, 229 - y, '#0a9a0a');
    });
    tops.forEach((t, i) => {
        const x = 12 + i * 5, y = (t - 198) / 3;
        if (candles[i].c == 'r') h += rect(x - .3, y + 1, 4.8, 228 - y, '#f08a84', 'stroke="#c23434" stroke-width="2"');
    });
    // 虚拟成交量
    h += rect(1060.5, 1, 6, 40, '#f3d24a') + line(1060, 12, 1064, 12, '#fff', 1.5) + line(1063, 20, 1067, 20, '#fff', 1.5) + line(1060, 28, 1064, 28, '#fff', 1.5);
    h += line(1063.5, 1, 1063.5, 228, '#e8b51c', 1.2, 'stroke-dasharray="8 4"');
    h += text(14, 43, '48.42万', 37, '#888', 126);
    h += poly(average(5), '#efc21c', 2.8) + poly(average(10), '#cf2bd0', 2.8);
    svg.innerHTML = h;
}

function drawAxis() {
    let h = '';
    for (let x = 184; x < 1064; x += 5) {
        h += line(x, 2, x, 11, '#666', 1.5, `opacity="${Math.min(1, (x - 174) / 70)}"`);
    }
    [354.5, 709.5, 1064].forEach(x => h += line(x, 1, x, 17, '#666', 2.5));
    [['20241030', 17, 164], ['20250212', 274, 162], ['20250528', 626, 167], ['20250905', 895, 169]]
        .forEach(d => h += text(d[1], 51, d[0], 36, '#666', d[2]));
    document.getElementById('axis').innerHTML = h;
}

drawKline();
document.querySelectorAll('.volume').forEach(drawVolume);
drawAxis();
```
